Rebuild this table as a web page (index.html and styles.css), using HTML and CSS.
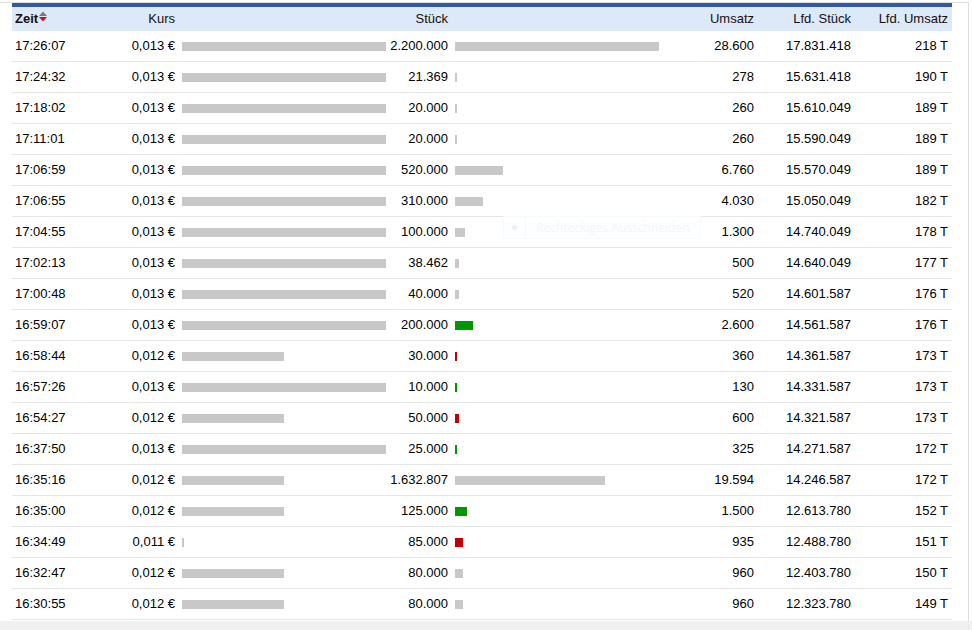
FILE: index.html
```html
<!DOCTYPE html>
<html lang="de">
<head>
<meta charset="utf-8">
<title>Times &amp; Sales</title>
<link rel="stylesheet" href="styles.css">
</head>
<body>
<div class="frame">
  <table class="trades">
    <colgroup>
      <col class="c-zeit"><col class="c-kurs"><col class="c-kbar"><col class="c-st"><col class="c-sbar"><col class="c-ums"><col class="c-lst"><col class="c-lums">
    </colgroup>
    <thead>
      <tr>
        <th class="l"><span class="bold">Zeit</span><svg class="sort" width="10" height="13" viewBox="0 0 10 13"><polygon points="1,6 5,1.5 9,6" fill="#7a7a7a"/><polygon points="1,7 9,7 5,11.5" fill="#c81414"/></svg></th>
        <th class="r">Kurs</th>
        <th></th>
        <th class="r">Stück</th>
        <th></th>
        <th class="r">Umsatz</th>
        <th class="r">Lfd. Stück</th>
        <th class="r">Lfd. Umsatz</th>
      </tr>
    </thead>
    <tbody>
      <tr><td class="l">17:26:07</td><td class="r">0,013 €</td><td class="bar"><i class="b" style="width:204px"></i></td><td class="r">2.200.000</td><td class="bar"><i class="b" style="width:204px"></i></td><td class="r">28.600</td><td class="r">17.831.418</td><td class="r">218 T</td></tr>
      <tr><td class="l">17:24:32</td><td class="r">0,013 €</td><td class="bar"><i class="b" style="width:204px"></i></td><td class="r">21.369</td><td class="bar"><i class="b" style="width:2px"></i></td><td class="r">278</td><td class="r">15.631.418</td><td class="r">190 T</td></tr>
      <tr><td class="l">17:18:02</td><td class="r">0,013 €</td><td class="bar"><i class="b" style="width:204px"></i></td><td class="r">20.000</td><td class="bar"><i class="b" style="width:2px"></i></td><td class="r">260</td><td class="r">15.610.049</td><td class="r">189 T</td></tr>
      <tr><td class="l">17:11:01</td><td class="r">0,013 €</td><td class="bar"><i class="b" style="width:204px"></i></td><td class="r">20.000</td><td class="bar"><i class="b" style="width:2px"></i></td><td class="r">260</td><td class="r">15.590.049</td><td class="r">189 T</td></tr>
      <tr><td class="l">17:06:59</td><td class="r">0,013 €</td><td class="bar"><i class="b" style="width:204px"></i></td><td class="r">520.000</td><td class="bar"><i class="b" style="width:48px"></i></td><td class="r">6.760</td><td class="r">15.570.049</td><td class="r">189 T</td></tr>
      <tr><td class="l">17:06:55</td><td class="r">0,013 €</td><td class="bar"><i class="b" style="width:204px"></i></td><td class="r">310.000</td><td class="bar"><i class="b" style="width:28px"></i></td><td class="r">4.030</td><td class="r">15.050.049</td><td class="r">182 T</td></tr>
      <tr><td class="l">17:04:55</td><td class="r">0,013 €</td><td class="bar"><i class="b" style="width:204px"></i></td><td class="r">100.000</td><td class="bar"><i class="b" style="width:10px"></i></td><td class="r">1.300</td><td class="r">14.740.049</td><td class="r">178 T</td></tr>
      <tr><td class="l">17:02:13</td><td class="r">0,013 €</td><td class="bar"><i class="b" style="width:204px"></i></td><td class="r">38.462</td><td class="bar"><i class="b" style="width:4px"></i></td><td class="r">500</td><td class="r">14.640.049</td><td class="r">177 T</td></tr>
      <tr><td class="l">17:00:48</td><td class="r">0,013 €</td><td class="bar"><i class="b" style="width:204px"></i></td><td class="r">40.000</td><td class="bar"><i class="b" style="width:4px"></i></td><td class="r">520</td><td class="r">14.601.587</td><td class="r">176 T</td></tr>
      <tr><td class="l">16:59:07</td><td class="r">0,013 €</td><td class="bar"><i class="b" style="width:204px"></i></td><td class="r">200.000</td><td class="bar"><i class="b up" style="width:18px"></i></td><td class="r">2.600</td><td class="r">14.561.587</td><td class="r">176 T</td></tr>
      <tr><td class="l">16:58:44</td><td class="r">0,012 €</td><td class="bar"><i class="b" style="width:102px"></i></td><td class="r">30.000</td><td class="bar"><i class="b dn" style="width:2px"></i></td><td class="r">360</td><td class="r">14.361.587</td><td class="r">173 T</td></tr>
      <tr><td class="l">16:57:26</td><td class="r">0,013 €</td><td class="bar"><i class="b" style="width:204px"></i></td><td class="r">10.000</td><td class="bar"><i class="b up" style="width:2px"></i></td><td class="r">130</td><td class="r">14.331.587</td><td class="r">173 T</td></tr>
      <tr><td class="l">16:54:27</td><td class="r">0,012 €</td><td class="bar"><i class="b" style="width:102px"></i></td><td class="r">50.000</td><td class="bar"><i class="b dn" style="width:4px"></i></td><td class="r">600</td><td class="r">14.321.587</td><td class="r">173 T</td></tr>
      <tr><td class="l">16:37:50</td><td class="r">0,013 €</td><td class="bar"><i class="b" style="width:204px"></i></td><td class="r">25.000</td><td class="bar"><i class="b up" style="width:2px"></i></td><td class="r">325</td><td class="r">14.271.587</td><td class="r">172 T</td></tr>
      <tr><td class="l">16:35:16</td><td class="r">0,012 €</td><td class="bar"><i class="b" style="width:102px"></i></td><td class="r">1.632.807</td><td class="bar"><i class="b" style="width:150px"></i></td><td class="r">19.594</td><td class="r">14.246.587</td><td class="r">172 T</td></tr>
      <tr><td class="l">16:35:00</td><td class="r">0,012 €</td><td class="bar"><i class="b" style="width:102px"></i></td><td class="r">125.000</td><td class="bar"><i class="b up" style="width:12px"></i></td><td class="r">1.500</td><td class="r">12.613.780</td><td class="r">152 T</td></tr>
      <tr><td class="l">16:34:49</td><td class="r">0,011 €</td><td class="bar"><i class="b" style="width:2px"></i></td><td class="r">85.000</td><td class="bar"><i class="b dn" style="width:8px"></i></td><td class="r">935</td><td class="r">12.488.780</td><td class="r">151 T</td></tr>
      <tr><td class="l">16:32:47</td><td class="r">0,012 €</td><td class="bar"><i class="b" style="width:102px"></i></td><td class="r">80.000</td><td class="bar"><i class="b" style="width:8px"></i></td><td class="r">960</td><td class="r">12.403.780</td><td class="r">150 T</td></tr>
      <tr><td class="l">16:30:55</td><td class="r">0,012 €</td><td class="bar"><i class="b" style="width:102px"></i></td><td class="r">80.000</td><td class="bar"><i class="b" style="width:8px"></i></td><td class="r">960</td><td class="r">12.323.780</td><td class="r">149 T</td></tr>
      <tr><td class="l">16:29:18</td><td class="r">0,013 €</td><td class="bar"><i class="b" style="width:204px"></i></td><td class="r">1.000.000</td><td class="bar"><i class="b" style="width:93px"></i></td><td class="r">13.000</td><td class="r">12.243.780</td><td class="r">148 T</td></tr>
    </tbody>
  </table>
</div>
<div class="snip"><span class="snip-dot"></span><span class="snip-text">Rechteckiges Ausschneiden</span></div>
<div class="fade"></div>
</body>
</html>
```
FILE: styles.css
```css
html, body {
  margin: 0;
  padding: 0;
  background: #ffffff;
  overflow: hidden;
}
body {
  font-family: "Liberation Sans", Arial, sans-serif;
  font-size: 13px;
  color: #000;
}
.frame {
  margin-top: 2px;
  width: 968px;
  height: 700px;
  border-top: 1px solid #dedede;
  border-right: 1px solid #dedede;
}
.trades {
  margin-left: 12px;
  width: 940px;
  table-layout: fixed;
  border-collapse: separate;
  border-spacing: 0;
  border-top: 4px solid #2f5ba6;
}
.c-zeit { width: 88px; }
.c-kurs { width: 79px; }
.c-kbar { width: 207px; }
.c-st { width: 66px; }
.c-sbar { width: 228px; }
.c-ums { width: 78px; }
.c-lst { width: 97px; }
.c-lums { width: 97px; }

thead th {
  background: #dde8f8;
  font-weight: normal;
  color: #111;
  height: 24px;
  line-height: 24px;
  padding: 0;
  white-space: nowrap;
}
.bold { font-weight: bold; }
.sort {
  display: inline-block;
  vertical-align: top;
  margin-top: 3px;
  margin-left: 0;
}
td {
  padding: 0;
  line-height: 30px;
  height: 30px;
  border-bottom: 1px solid #e5e5e5;
  white-space: nowrap;
  overflow: hidden;
}
.l { text-align: left; padding-left: 3px; }
.r { text-align: right; padding-right: 4px; }
.bar { padding-left: 3px; font-size: 0; line-height: 30px; }
.b {
  display: inline-block;
  height: 9px;
  vertical-align: middle;
  background: #c8c8c8;
}
.b.up { background: #009600; }
.b.dn { background: #bf0000; }

.snip {
  position: absolute;
  left: 503px;
  top: 216px;
  width: 196px;
  height: 21px;
  border: 1px solid #f8f9fb;
  background: rgba(252, 253, 255, 0.6);
  display: flex;
  align-items: center;
}
.snip-dot {
  width: 21px;
  height: 21px;
  border-right: 1px solid #f7f8fa;
  display: flex;
  align-items: center;
  justify-content: center;
}
.snip-dot::after {
  content: "";
  width: 5px;
  height: 5px;
  border-radius: 50%;
  background: #eeeef2;
}
.snip-text {
  padding-left: 10px;
  font-family: "Open Sans", "Liberation Sans", sans-serif;
  font-size: 12px;
  color: #f4f5f8;
}
.fade {
  position: fixed;
  left: 0;
  right: 0;
  bottom: 0;
  height: 9px;
  background: rgba(236, 236, 236, 0.8);
}
```
